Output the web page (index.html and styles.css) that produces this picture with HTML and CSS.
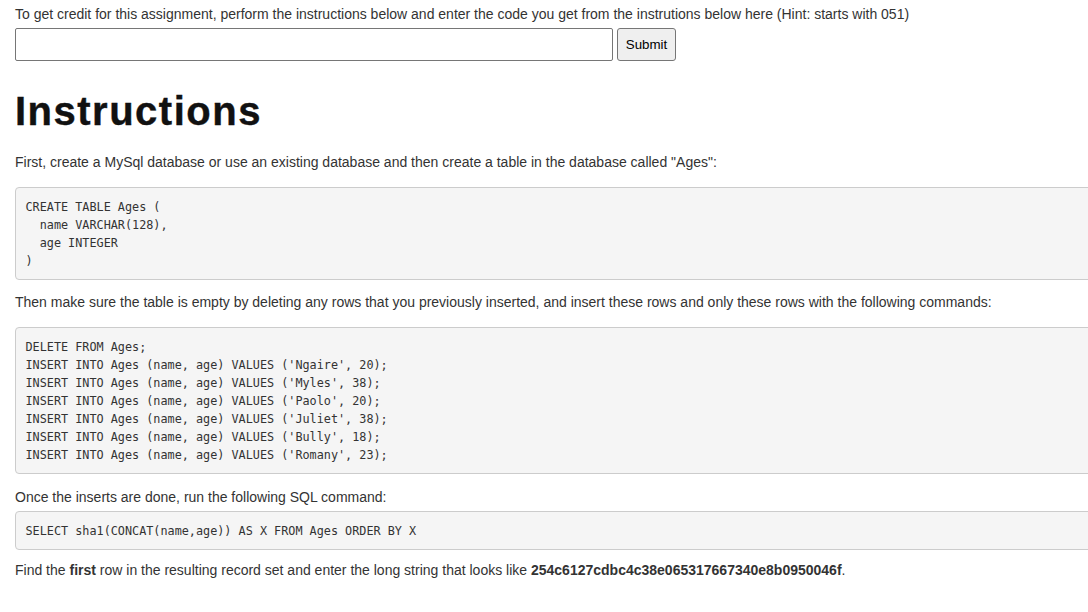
FILE: index.html
```html
<!DOCTYPE html>
<html lang="en">
<head>
<meta charset="utf-8">
<title>Instructions</title>
<link rel="stylesheet" href="styles.css">
</head>
<body>
<p class="intro">To get credit for this assignment, perform the instructions below and enter the code you get from the instrutions below here (Hint: starts with 051)</p>
<form class="code-form" onsubmit="return false;">
  <input class="code-input" type="text" name="code">
  <button class="submit-btn" type="submit">Submit</button>
</form>
<h1 class="title">Instructions</h1>
<p class="step step-1">First, create a MySql database or use an existing database and then create a table in the database called "Ages":</p>
<pre class="code code-1">CREATE TABLE Ages ( 
  name VARCHAR(128), 
  age INTEGER
)</pre>
<p class="step step-2">Then make sure the table is empty by deleting any rows that you previously inserted, and insert these rows and only these rows with the following commands:</p>
<pre class="code code-2">DELETE FROM Ages;
INSERT INTO Ages (name, age) VALUES ('Ngaire', 20);
INSERT INTO Ages (name, age) VALUES ('Myles', 38);
INSERT INTO Ages (name, age) VALUES ('Paolo', 20);
INSERT INTO Ages (name, age) VALUES ('Juliet', 38);
INSERT INTO Ages (name, age) VALUES ('Bully', 18);
INSERT INTO Ages (name, age) VALUES ('Romany', 23);</pre>
<p class="step step-3">Once the inserts are done, run the following SQL command:</p>
<pre class="code code-3">SELECT sha1(CONCAT(name,age)) AS X FROM Ages ORDER BY X</pre>
<p class="step step-4">Find the <b>first</b> row in the resulting record set and enter the long string that looks like <b>254c6127cdbc4c38e065317667340e8b0950046f</b>.</p>
</body>
</html>
```
FILE: styles.css
```css
html, body {
  overflow-x: hidden;
}

body {
  margin: 0;
  padding: 4px 0 0 15px;
  font-family: "Liberation Sans", Arial, sans-serif;
  font-size: 14px;
  line-height: 20px;
  color: #333;
  background: #fff;
}

p {
  margin: 0;
}

.code-form {
  display: flex;
  align-items: stretch;
  gap: 4px;
  margin-top: 4px;
  height: 33px;
}

.code-input {
  box-sizing: border-box;
  width: 598px;
  height: 33px;
  margin: 0;
  padding: 1px 2px;
  border: 1px solid #767676;
  border-radius: 2px;
  background: #fff;
  font-family: "Liberation Sans", Arial, sans-serif;
  font-size: 13.33px;
}

.submit-btn {
  box-sizing: border-box;
  width: 59px;
  height: 33px;
  margin: 0;
  padding: 1px 6px;
  border: 1px solid #767676;
  border-radius: 3px;
  background: #efefef;
  color: #000;
  font-family: "Liberation Sans", Arial, sans-serif;
  font-size: 13.33px;
}

.title {
  margin: 28px 0 0;
  font-size: 40px;
  line-height: 44px;
  font-weight: 700;
  letter-spacing: 1.5px;
  color: #111;
  -webkit-text-stroke: 0.4px #111;
}

.step-1 { margin-top: 19px; }
.step-2 { margin-top: 12px; }
.step-3 { margin-top: 13px; }
.step-4 { margin-top: 10px; }

.code {
  box-sizing: border-box;
  width: 1100px;
  margin: 0;
  padding: 10px 9.5px 9px;
  border: 1px solid #ccc;
  border-radius: 4px;
  background: #f5f5f5;
  color: #333;
  font-family: "DejaVu Sans Mono", Consolas, monospace;
  font-size: 11.8px;
  line-height: 18px;
  white-space: pre;
}

.code-1 { margin-top: 15px; }
.code-2 { margin-top: 15px; }
.code-3 { margin-top: 4px; }
```
